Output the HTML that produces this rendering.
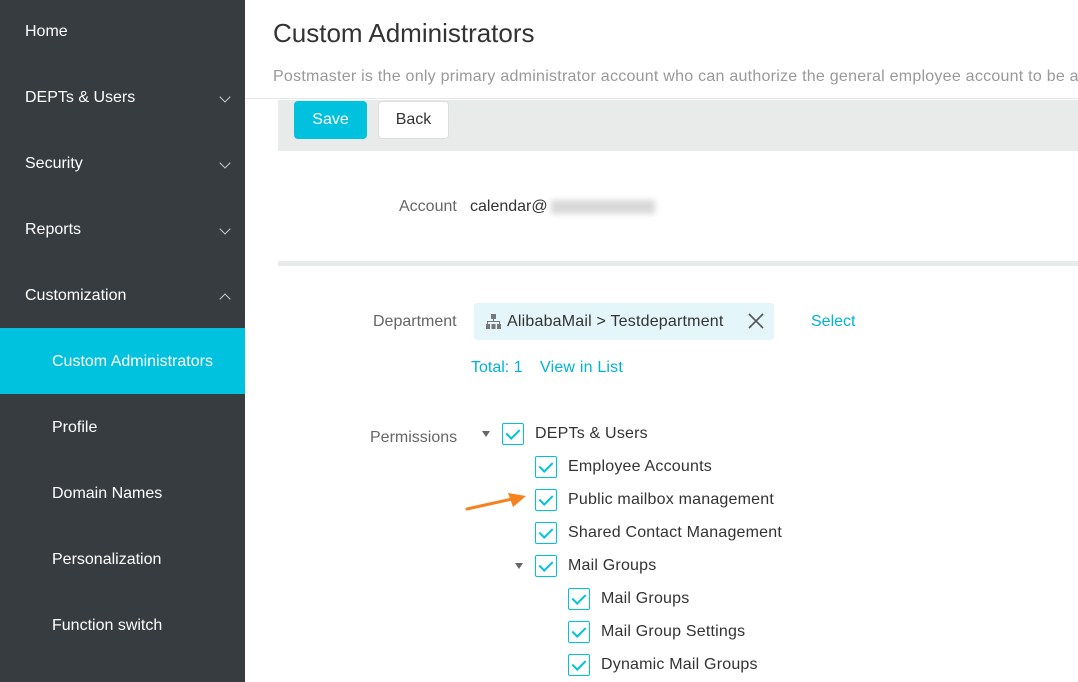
<!DOCTYPE html>
<html><head><meta charset="utf-8"><style>
*{margin:0;padding:0;box-sizing:border-box}
body{width:1078px;height:682px;overflow:hidden;background:#fff;font-family:"Liberation Sans",sans-serif;position:relative}
.sb{position:absolute;left:0;top:0;width:245px;height:682px;background:#373c41}
.it{position:absolute;left:0;width:245px;height:66px;line-height:66px;color:#fff;font-size:16px;padding-left:25px}
.it.sub{padding-left:52px}
.it.act{background:#00c1de}
.chev{position:absolute;right:16px;top:28px;width:8px;height:8px;border-right:1.5px solid #ccc;border-bottom:1.5px solid #ccc;transform:rotate(45deg)}
.chev.up{transform:rotate(225deg);top:32px}
.a{position:absolute;white-space:nowrap}
.cb{position:absolute;width:22px;height:22px;border:1.5px solid #00c1de;border-radius:2px;background:#fff}
.cb:after{content:"";position:absolute;left:6px;top:2px;width:6px;height:11px;border-right:2px solid #00c1de;border-bottom:2px solid #00c1de;transform:rotate(45deg)}
.tl{position:absolute;font-size:16px;color:#333;white-space:nowrap;letter-spacing:0.2px}
.tri{position:absolute;width:0;height:0;border-left:4px solid transparent;border-right:4px solid transparent;border-top:6px solid #666}
</style></head><body>
<div class="sb">
<div class="it" style="top:-1px">Home</div>
<div class="it" style="top:65px">DEPTs &amp; Users<span class="chev"></span></div>
<div class="it" style="top:131px">Security<span class="chev"></span></div>
<div class="it" style="top:197px">Reports<span class="chev"></span></div>
<div class="it" style="top:263px">Customization<span class="chev up"></span></div>
<div class="it sub act" style="top:328px;line-height:68px">Custom Administrators</div>
<div class="it sub" style="top:395px">Profile</div>
<div class="it sub" style="top:461px">Domain Names</div>
<div class="it sub" style="top:527px">Personalization</div>
<div class="it sub" style="top:593px">Function switch</div>
</div>
<div class="a" style="left:273px;top:18px;font-size:26px;color:#333">Custom Administrators</div>
<div class="a" style="left:273px;top:68px;font-size:16px;color:#999;letter-spacing:0.25px">Postmaster is the only primary administrator account who can authorize the general employee account to be a</div>
<div class="a" style="left:245px;top:98px;width:833px;height:1px;background:#e8e8e8"></div>
<div class="a" style="left:278px;top:100px;width:800px;height:51px;background:#e9ebeb"></div>
<div class="a" style="left:294px;top:101px;width:73px;height:38px;background:#00c1de;border-radius:4px;color:#fff;font-size:16px;text-align:center;line-height:38px">Save</div>
<div class="a" style="left:378px;top:101px;width:71px;height:38px;background:#fff;border:1px solid #ddd;border-radius:4px;color:#333;font-size:16px;text-align:center;line-height:36px">Back</div>
<div class="a" style="left:399px;top:198px;font-size:16px;color:#666">Account</div>
<div class="a" style="left:470px;top:198px;font-size:16px;color:#333">calendar@</div>
<div class="a" style="left:551px;top:200px;width:104px;height:14px;background:#d8d8d8;filter:blur(3px)"></div>
<div class="a" style="left:278px;top:261px;width:800px;height:5px;background:#e9ebeb"></div>
<div class="a" style="left:373px;top:313px;font-size:16px;color:#666">Department</div>
<div class="a" style="left:474px;top:303px;width:300px;height:37px;background:#e4f6fa;border-radius:3px"></div>
<svg class="a" style="left:486px;top:314px" width="15" height="15" viewBox="0 0 15 15"><rect x="5" y="0" width="5" height="5" fill="#777"/><rect x="7" y="5" width="1" height="3" fill="#777"/><rect x="1" y="7" width="13" height="1" fill="#777"/><rect x="1" y="7" width="1" height="3" fill="#777"/><rect x="13" y="7" width="1" height="3" fill="#777"/><rect x="0" y="10" width="4" height="5" fill="#777"/><rect x="5.5" y="10" width="4" height="5" fill="#777"/><rect x="11" y="10" width="4" height="5" fill="#777"/></svg>
<div class="a" style="left:507px;top:313px;font-size:16px;color:#333;letter-spacing:0.2px">AlibabaMail &gt; Testdepartment</div>
<svg class="a" style="left:748px;top:313px" width="16" height="16"><path d="M1 1L15 15M15 1L1 15" stroke="#555" stroke-width="1.6"/></svg>
<div class="a" style="left:811px;top:313px;font-size:16px;color:#00b3d6">Select</div>
<div class="a" style="left:471px;top:359px;font-size:16px;color:#00b3d6">Total: 1</div>
<div class="a" style="left:540px;top:359px;font-size:16px;color:#00b3d6;letter-spacing:0.2px">View in List</div>
<div class="a" style="left:370px;top:429px;font-size:16px;color:#666">Permissions</div>
<div class="tri" style="left:482px;top:431px"></div>
<div class="cb" style="left:502px;top:423px"></div><div class="tl" style="left:535px;top:425px">DEPTs &amp; Users</div>
<div class="cb" style="left:535px;top:456px"></div><div class="tl" style="left:568px;top:458px">Employee Accounts</div>
<div class="cb" style="left:535px;top:489px"></div><div class="tl" style="left:568px;top:491px">Public mailbox management</div>
<div class="cb" style="left:535px;top:522px"></div><div class="tl" style="left:568px;top:524px">Shared Contact Management</div>
<div class="tri" style="left:515px;top:563px"></div>
<div class="cb" style="left:535px;top:555px"></div><div class="tl" style="left:568px;top:557px">Mail Groups</div>
<div class="cb" style="left:568px;top:588px"></div><div class="tl" style="left:601px;top:590px">Mail Groups</div>
<div class="cb" style="left:568px;top:621px"></div><div class="tl" style="left:601px;top:623px">Mail Group Settings</div>
<div class="cb" style="left:568px;top:654px"></div><div class="tl" style="left:601px;top:656px">Dynamic Mail Groups</div>
<svg class="a" style="left:464px;top:490px" width="64" height="22"><path d="M3 19L48 9" stroke="#f5821f" stroke-width="3" stroke-linecap="round"/><path d="M44 3L62 6L49 17Z" fill="#f5821f"/></svg>
</body></html>
